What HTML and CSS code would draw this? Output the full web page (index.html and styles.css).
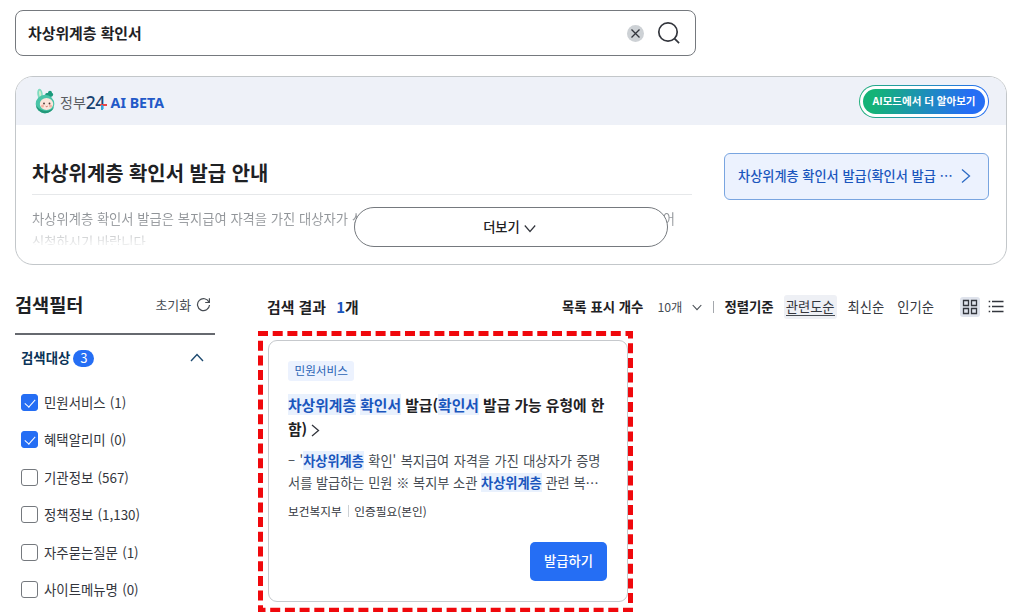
FILE: index.html
```html
<!DOCTYPE html>
<html lang="ko">

<head>
    <meta charset="UTF-8">
    <meta name="viewport" content="width=device-width, initial-scale=1.0">
    <title>통합검색</title>
    <link rel="stylesheet" href="styles.css">
</head>

<body>
    <form class="search">
        <input type="text" class="search_input" value="차상위계층 확인서">
        <button type="button" class="clear">
            <svg width="17" height="17" viewBox="0 0 17 17"><circle cx="8.5" cy="8.5" r="8.5" fill="#cdd1d5"/><path d="M4.5 4.5l8 8M12.5 4.5l-8 8" stroke="#33363d" stroke-width="1.3"/></svg>
        </button>
        <button type="button" class="find">
            <svg width="24" height="24" viewBox="0 0 24 24" fill="none" stroke="#33363d" stroke-width="1.7"><circle cx="11" cy="11" r="9.2"/><path d="M17.3 17.3l4.8 4.8"/></svg>
        </button>
    </form>

    <section class="ai">
        <div class="ai_head">
            <svg class="mascot" width="22" height="26" viewBox="0 0 22 26">
                <ellipse cx="6" cy="6" rx="2.7" ry="5.2" fill="#7edbc0" transform="rotate(-8 6 6)"/>
                <ellipse cx="6.2" cy="6.2" rx="1.1" ry="3.5" fill="#cfeccb" transform="rotate(-8 6.2 6.2)"/>
                <path d="M12 9c-2-3 0-4.5 2-4 0-3 4-3 4 0 2 .5 1.5 4-2 4z" fill="#1b9a7c"/>
                <circle cx="11" cy="16" r="9.3" fill="#49c4a7"/>
                <path d="M2 17a9.3 9.3 0 0 0 18 2c-3 5-13 6-18-2z" fill="#239879"/>
                <ellipse cx="12.5" cy="16" rx="6.7" ry="6" fill="#fbe6dc"/>
                <circle cx="10" cy="15.5" r=".9" fill="#4b3230"/>
                <circle cx="15.5" cy="15.5" r=".9" fill="#4b3230"/>
                <circle cx="8.5" cy="18" r="1.5" fill="#f5b3a4"/>
                <circle cx="16.5" cy="18" r="1.5" fill="#f5b3a4"/>
                <path d="M11.7 18.2q1 1 2 0" fill="none" stroke="#b54d45" stroke-width=".8"/>
            </svg>
            <span class="gov">정부</span>
            <span class="gov_num">2<span class="four">4<i class="plus"></i></span></span>
            <span class="beta">AI BETA</span>
            <a class="ai_mode"><span>AI모드에서 더 알아보기</span></a>
        </div>
        <div class="ai_body">
            <div class="guide">
                <h2>차상위계층 확인서 발급 안내</h2>
                <div class="guide_text">
                    차상위계층 확인서 발급은 복지급여 자격을 가진 대상자가 신청이 가능하며 온라인 또는 주민센터에서 발급할 수 &nbsp;있어<br>신청하시기 바랍니다.
                </div>
            </div>
            <a class="go_link">
                <span>차상위계층 확인서 발급(확인서 발급 ⋯</span>
                <svg width="10" height="16" viewBox="0 0 10 16" fill="none" stroke="#2d6bc4" stroke-width="1.3"><path d="M1 1.5l7.5 6.5L1 14.5"/></svg>
            </a>
        </div>
        <button type="button" class="more">더보기
            <svg width="12" height="9" viewBox="0 0 12 9" fill="none" stroke="#33363d" stroke-width="1.2"><path d="M.8 1.5L6 7.5l5.2-6"/></svg>
        </button>
    </section>

    <main class="content">
        <aside class="filter">
            <div class="filter_head">
                <h2>검색필터</h2>
                <button type="button" class="reset">초기화
                    <svg width="15" height="15" viewBox="0 0 15 15" fill="none" stroke="#464c53" stroke-width="1.2"><path d="M13 5.2A6 6 0 1 0 13.5 8M13.4 1.2v4.3H9.2"/></svg>
                </button>
            </div>
            <div class="group_head">
                <b>검색대상</b>
                <span class="count">3</span>
                <svg width="14" height="9" viewBox="0 0 14 9" fill="none" stroke="#1d4a70" stroke-width="1.4"><path d="M1 8l6-6.5L13 8"/></svg>
            </div>
            <ul class="checks">
                <li><label><input type="checkbox" checked>민원서비스 (1)</label></li>
                <li><label><input type="checkbox" checked>혜택알리미 (0)</label></li>
                <li><label><input type="checkbox">기관정보 (567)</label></li>
                <li><label><input type="checkbox">정책정보 (1,130)</label></li>
                <li><label><input type="checkbox">자주묻는질문 (1)</label></li>
                <li><label><input type="checkbox">사이트메뉴명 (0)</label></li>
            </ul>
        </aside>

        <section class="result">
            <div class="toolbar">
                <h3>검색 결과 <em>1</em>개</h3>
                <b class="per_page">목록 표시 개수</b>
                <span class="num">10개</span>
                <svg class="num_arrow" width="10" height="7" viewBox="0 0 10 7" fill="none" stroke="#464c53" stroke-width="1.1"><path d="M.7 1L5 5.7 9.3 1"/></svg>
                <i class="bar"></i>
                <b class="sort_title">정렬기준</b>
                <a class="sort on"><span>관련도순</span></a>
                <a class="sort">최신순</a>
                <a class="sort">인기순</a>
                <a class="view on">
                    <svg width="16" height="16" viewBox="0 0 16 16" fill="none" stroke="#33363d" stroke-width="1.3"><path d="M1.5 1.5h5v5h-5zM9.5 1.5h5v5h-5zM1.5 9.5h5v5h-5zM9.5 9.5h5v5h-5z"/></svg>
                </a>
                <a class="view">
                    <svg width="16" height="13" viewBox="0 0 16 13" stroke="#33363d" stroke-width="1.3"><path d="M4 1.5h11.5M4 6.5h11.5M4 11.5h11.5M.7 1.5h1.5M.7 6.5h1.5M.7 11.5h1.5"/></svg>
                </a>
            </div>

            <div class="card_wrap">
                <article class="card">
                    <span class="tag">민원서비스</span>
                    <h4><mark>차상위계층</mark> <mark>확인서</mark> 발급(<mark>확인서</mark> 발급 가능 유형에 한<br>함)
                        <svg width="9" height="13" viewBox="0 0 9 13" fill="none" stroke="#33363d" stroke-width="1.3"><path d="M1 1l6.5 5.5L1 12"/></svg>
                    </h4>
                    <p class="desc"><span class="first">– '<mark>차상위계층</mark> 확인' 복지급여 자격을 가진 대상자가 증명</span><br>서를 발급하는 민원 ※ 복지부 소관 <mark>차상위계층</mark> 관련 복⋯</p>
                    <div class="meta"><span>보건복지부</span><span>인증필요(본인)</span></div>
                    <button type="button" class="issue">발급하기</button>
                </article>
                <svg class="highlight" width="375" height="282" viewBox="0 0 375 282"><rect x="2.5" y="2.5" width="370" height="276.8"/></svg>
            </div>
        </section>
    </main>
</body>

</html>
```
FILE: styles.css
```css
* {
    box-sizing: border-box;
}

body {
    margin: 0;
    padding: 10px 17px 0 15px;
    height: 612px;
    overflow: hidden;
    background-color: #fff;
    color: #1e2124;
    font-family: "Noto Sans CJK KR", sans-serif;
    font-size: 13.4px;
}

h2, h3, h4, p, ul {
    margin: 0;
    padding: 0;
}

button {
    padding: 0;
    border: none;
    background: none;
    color: inherit;
    font-family: inherit;
    cursor: pointer;
}

svg {
    display: block;
    flex: none;
}

mark {
    background-color: #e9f1fd;
    color: #1a56bd;
}

/* search */

.search {
    display: flex;
    align-items: center;
    width: 681px;
    height: 46px;
    padding: 0 14px 0 12px;
    border: 1px solid #75797e;
    border-radius: 8px;
}

.search_input {
    flex: 1;
    padding: 0 0 2px;
    border: none;
    outline: none;
    color: #1e2124;
    font-family: inherit;
    font-size: 14.9px;
    font-weight: 700;
}

.find {
    margin-left: 13px;
}

/* ai guide */

.ai {
    position: relative;
    height: 189px;
    margin-top: 20px;
    border: 1px solid #c3c7ca;
    border-radius: 18px;
    overflow: hidden;
}

.ai_head {
    display: flex;
    align-items: center;
    height: 48px;
    padding: 0 17px 0 18px;
    background-color: #eef1f8;
}

.gov {
    margin: 1px 0 0 4px;
    color: #5a5d62;
    font-size: 14px;
}

.gov_num {
    margin-top: 2px;
    color: #17416f;
    font-family: "Noto Sans", sans-serif;
    font-size: 17.5px;
    font-weight: 500;
    letter-spacing: -0.6px;
}

.four {
    position: relative;
}

.plus {
    position: absolute;
    right: -2px;
    bottom: 8px;
    width: 7px;
    height: 2px;
    background-color: #e5484a;
}

.plus::after {
    content: "";
    position: absolute;
    left: 1px;
    top: 1px;
    width: 2px;
    height: 5px;
    background-color: #36a3d9;
}

.beta {
    margin: 3px 0 0 6px;
    color: #2259c8;
    font-family: "Noto Sans", sans-serif;
    font-size: 14.2px;
    font-weight: 700;
}

.ai_mode {
    margin-left: auto;
    padding: 3px;
    border: 1px solid transparent;
    border-radius: 17px;
    background: linear-gradient(#fff, #fff) padding-box, linear-gradient(90deg, #22b07d, #256ef4) border-box;
}

.ai_mode span {
    display: block;
    width: 122px;
    height: 25px;
    border-radius: 13px;
    background: linear-gradient(100deg, #14b377 10%, #256ef4 85%);
    color: #fff;
    font-size: 10.5px;
    font-weight: 700;
    line-height: 23px;
    text-align: center;
}

.ai_body {
    display: flex;
    justify-content: space-between;
    padding: 28px 17px 0 16px;
}

.guide {
    width: 660px;
}

.guide h2 {
    height: 42px;
    border-bottom: 1px solid #e6e8ea;
    font-size: 19.9px;
    font-weight: 700;
    line-height: 40px;
}

.guide_text {
    height: 38px;
    margin-top: 12px;
    overflow: hidden;
    color: #464c53;
    font-size: 13.3px;
    line-height: 23px;
    white-space: nowrap;
    -webkit-mask-image: linear-gradient(rgba(0, 0, 0, 0.65), rgba(0, 0, 0, 0.5) 50%, rgba(0, 0, 0, 0.1) 95%);
    mask-image: linear-gradient(rgba(0, 0, 0, 0.65), rgba(0, 0, 0, 0.5) 50%, rgba(0, 0, 0, 0.1) 95%);
}

.go_link {
    display: flex;
    align-items: center;
    justify-content: space-between;
    width: 265px;
    height: 47px;
    padding: 0 17px 1px 13px;
    border: 1px solid #79a5e0;
    border-radius: 6px;
    background-color: #ecf2fe;
    color: #1a56bd;
    font-size: 13.2px;
    font-weight: 500;
}

.go_link span {
    margin-bottom: 2px;
}

.more {
    position: absolute;
    left: 338px;
    top: 130px;
    display: flex;
    align-items: center;
    justify-content: center;
    gap: 4px;
    width: 314px;
    height: 40px;
    padding: 0 3px 2px 0;
    border: 1px solid #75797e;
    border-radius: 20px;
    background-color: #fff;
    font-size: 13.3px;
    font-weight: 500;
}

.more svg {
    margin-top: 4px;
}

.content {
    display: flex;
    gap: 52px;
    margin-top: 22px;
}

/* filter */

.filter {
    width: 200px;
}

.filter_head {
    display: flex;
    align-items: center;
    justify-content: space-between;
    height: 48px;
    padding: 0 4px 12px 0;
    border-bottom: 2px solid #66696f;
}

.filter_head h2 {
    margin-bottom: 1px;
    font-size: 18.6px;
    font-weight: 700;
}

.reset {
    display: flex;
    align-items: center;
    gap: 5px;
    color: #464c53;
    font-size: 12.9px;
}

.group_head {
    display: flex;
    align-items: center;
    height: 46px;
    padding: 0 11px 1px 6px;
    color: #0b3458;
}

.group_head b {
    margin-bottom: 1px;
}

.group_head svg {
    margin-left: auto;
}

.count {
    width: 21px;
    height: 17px;
    margin: 2px 0 0 3px;
    border-radius: 9px;
    background-color: #256ef4;
    color: #fff;
    font-size: 13px;
    line-height: 16px;
    text-align: center;
}

.checks {
    padding: 2px 0 0 6px;
    list-style: none;
}

.checks label {
    display: flex;
    align-items: center;
    height: 37.5px;
    color: #33363d;
    word-spacing: 0.5px;
}

.checks input {
    appearance: none;
    width: 17px;
    height: 17px;
    margin: 1px 6px 0 0;
    border: 1px solid #75797e;
    border-radius: 3px;
}

.checks input:checked {
    position: relative;
    border-color: #256ef4;
    background-color: #256ef4;
}

.checks input:checked::after {
    content: "";
    position: absolute;
    left: 5px;
    top: 2px;
    width: 5px;
    height: 9px;
    border: solid #fff;
    border-width: 0 1px 1px 0;
    transform: rotate(42deg);
}

/* result */

.result {
    flex: 1;
}

.toolbar {
    display: flex;
    align-items: center;
    height: 40px;
    padding-bottom: 1px;
    white-space: nowrap;
}

.toolbar h3 {
    width: 295px;
    margin-bottom: 1px;
    font-size: 14.9px;
    font-weight: 700;
}

.toolbar em {
    margin-left: 6px;
    color: #1a56bd;
    font-style: normal;
    font-weight: 700;
}

.per_page {
    margin-bottom: 1px;
}

.num {
    margin-left: 14px;
    color: #464c53;
    font-size: 12.3px;
}

.num_arrow {
    margin: 2px 0 0 10px;
}

.bar {
    width: 1px;
    height: 12px;
    margin: 0 10px 0 11px;
    background-color: #a4a8ad;
}

.sort_title {
    margin: 0 10px 1px 0;
}

.sort {
    margin-right: 13px;
    color: #33363d;
    font-size: 13.3px;
}

.sort.on {
    height: 24px;
    margin-right: 11px;
    padding: 0 2px;
    border-radius: 3px;
    background-color: #eef0f5;
    line-height: 23px;
}

.sort.on span {
    display: block;
    height: 21px;
    border-bottom: 1px solid #464c53;
}

.view {
    display: flex;
    align-items: center;
    justify-content: center;
    width: 20px;
    height: 20px;
    margin-left: 6px;
    border-radius: 3px;
}

.view.on {
    margin-left: 13px;
    background-color: #dfe3ec;
}

.card_wrap {
    position: relative;
    margin-top: 13px;
}

.card {
    display: flex;
    flex-direction: column;
    align-items: flex-start;
    width: 360px;
    height: 262px;
    margin-left: 1px;
    padding: 20px 20px 0 19px;
    border: 1px solid #c6c9cd;
    border-radius: 9px;
    white-space: nowrap;
}

.tag {
    height: 20px;
    padding: 0 6.5px;
    border-radius: 3px;
    background-color: #ecf2fe;
    color: #2a62b5;
    font-size: 11.6px;
    line-height: 18px;
}

.card h4 {
    margin-top: 12px;
    font-size: 14.8px;
    font-weight: 700;
    line-height: 24px;
}

.card h4 svg {
    display: inline-block;
    vertical-align: -2px;
}

.desc {
    margin-top: 9px;
    color: #464c53;
    font-size: 13.2px;
    line-height: 21.5px;
}

.desc .first {
    word-spacing: 0.75px;
}

.desc mark {
    font-weight: 700;
}

.meta {
    display: flex;
    align-items: center;
    margin-top: 9px;
    color: #33363d;
    font-size: 11.7px;
    line-height: 18px;
}

.meta span + span {
    margin-left: 6px;
    padding-left: 6.5px;
    background: linear-gradient(#cdd1d5, #cdd1d5) left center / 1px 12px no-repeat;
}

.issue {
    align-self: flex-end;
    width: 77px;
    height: 39px;
    margin-top: 22px;
    padding-bottom: 2px;
    border-radius: 5px;
    background-color: #256ef4;
    color: #fff;
    font-size: 13.3px;
    font-weight: 500;
}

.highlight {
    position: absolute;
    left: -9px;
    top: -9px;
}

.highlight rect {
    fill: none;
    stroke: #f0080c;
    stroke-width: 5;
    stroke-dasharray: 10 4.7;
    stroke-dashoffset: 2.5;
}
```
